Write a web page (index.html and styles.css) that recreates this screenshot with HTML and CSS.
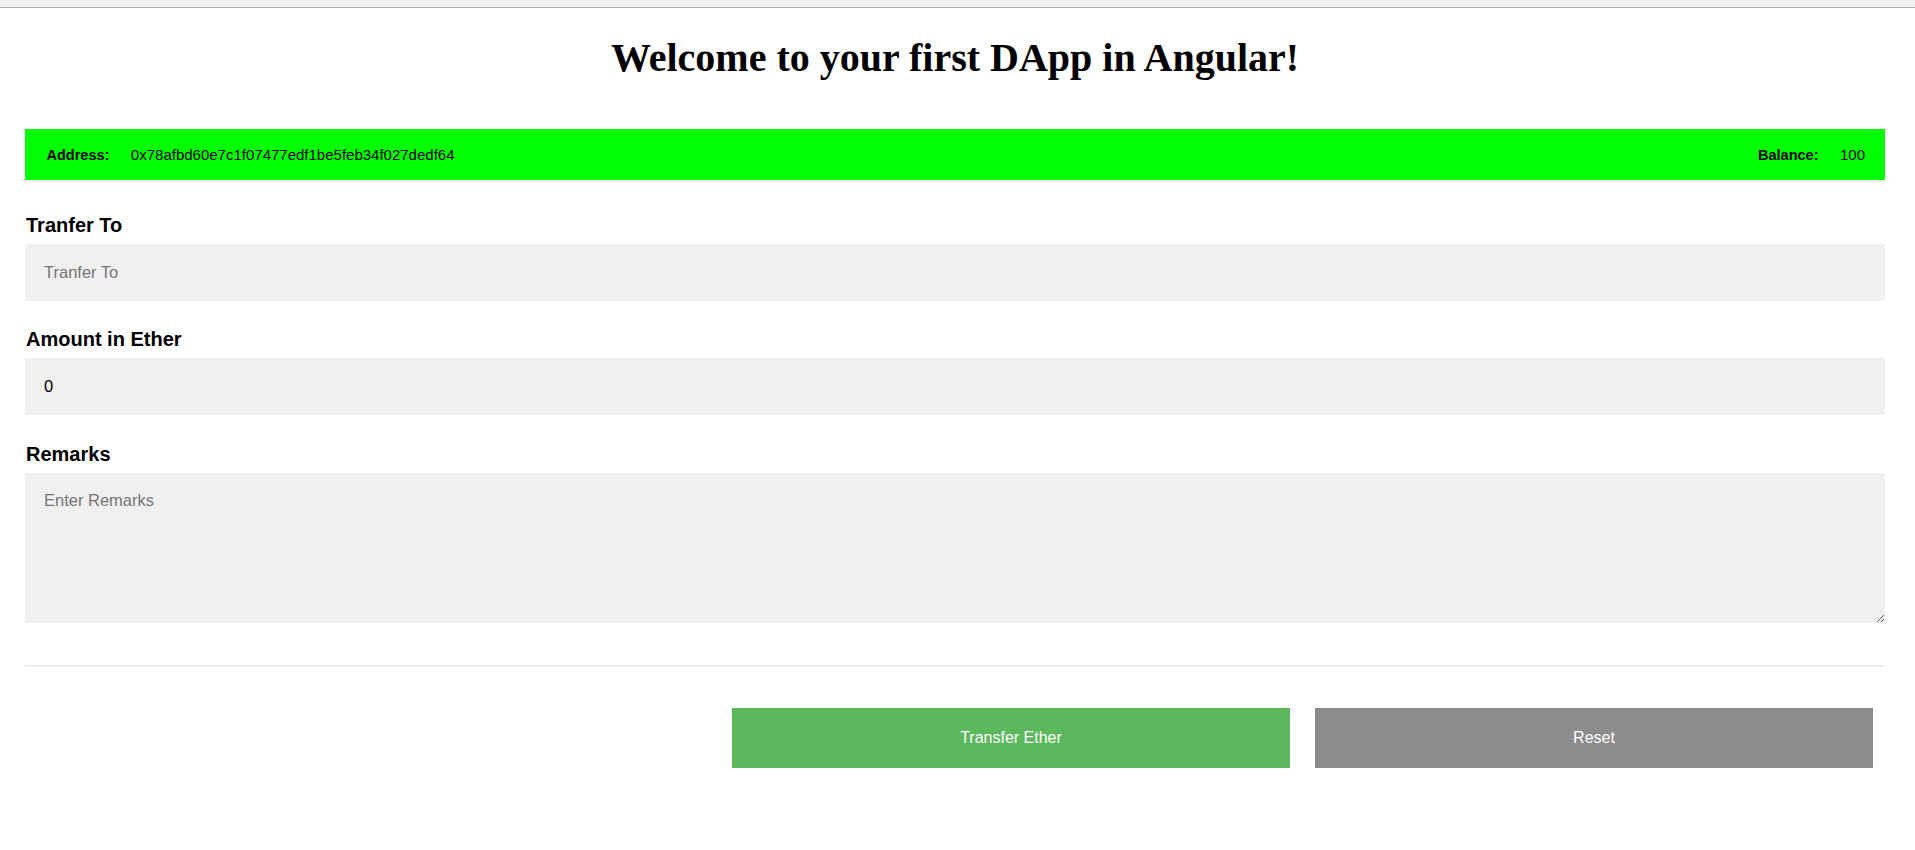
FILE: index.html
```html
<!DOCTYPE html>
<html lang="en">
<head>
<meta charset="utf-8">
<title>DApp</title>
<link rel="stylesheet" href="styles.css">
</head>
<body>
<div class="chrome-edge"></div>
<main class="app">
  <h1 class="title">Welcome to your first DApp in Angular!</h1>
  <div class="account-bar">
    <div class="account-item">
      <span class="account-label">Address:</span>
      <span class="account-value">0x78afbd60e7c1f07477edf1be5feb34f027dedf64</span>
    </div>
    <div class="account-item">
      <span class="account-label">Balance:</span>
      <span class="account-value">100</span>
    </div>
  </div>
  <form class="transfer-form">
    <div class="form-group">
      <label class="field-label" for="to">Tranfer To</label>
      <input class="field-input" id="to" type="text" placeholder="Tranfer To">
    </div>
    <div class="form-group">
      <label class="field-label" for="amount">Amount in Ether</label>
      <input class="field-input" id="amount" type="text" value="0">
    </div>
    <div class="form-group">
      <label class="field-label" for="remarks">Remarks</label>
      <textarea class="field-textarea" id="remarks" placeholder="Enter Remarks"></textarea>
    </div>
    <hr class="divider">
    <div class="actions">
      <button type="button" class="btn btn-transfer">Transfer Ether</button>
      <button type="button" class="btn btn-reset">Reset</button>
    </div>
  </form>
</main>
</body>
</html>
```
FILE: styles.css
```css
html, body {
  margin: 0;
  padding: 0;
  background: #ffffff;
}

body {
  font-family: "Liberation Sans", Arial, sans-serif;
  color: #000;
}

.chrome-edge {
  height: 7px;
  background: #f1f1f1;
  border-bottom: 1px solid #b0b0b0;
}

.app {
  margin: 0 30px 0 25px;
}

.title {
  font-family: "Liberation Serif", "Times New Roman", serif;
  font-weight: bold;
  font-size: 40px;
  line-height: 44px;
  text-align: center;
  margin: 28px 0 49px;
}

.account-bar {
  display: flex;
  justify-content: space-between;
  align-items: center;
  height: 51px;
  padding: 0 20px 0 21.5px;
  background: #00ff00;
  border-bottom: 2px solid #eeeeee;
  font-size: 15px;
}

.account-item {
  display: flex;
  align-items: center;
  gap: 21.5px;
}

.account-label {
  font-weight: bold;
  font-size: 14.5px;
}

.transfer-form {
  display: flex;
  flex-direction: column;
  padding-top: 31.5px;
}

.form-group {
  display: flex;
  flex-direction: column;
  margin-bottom: 27.5px;
}

.field-label {
  font-weight: bold;
  font-size: 20px;
  line-height: 22px;
  margin-bottom: 8px;
  padding-left: 1px;
}

.field-input,
.field-textarea {
  box-sizing: border-box;
  width: 100%;
  border: none;
  outline: none;
  background: #f0f0f0;
  font-family: "Liberation Sans", Arial, sans-serif;
  font-size: 16.5px;
  color: #000;
  margin: 0;
}

.field-input {
  height: 57px;
  padding: 0 19px;
}

.field-textarea {
  height: 150px;
  padding: 18.5px 19px;
  resize: vertical;
  display: block;
}

.field-input::placeholder,
.field-textarea::placeholder {
  color: #757575;
}

.divider {
  border: none;
  height: 2px;
  background: #eeeeee;
  margin: 15px 0 41px;
}

.actions {
  display: flex;
  justify-content: flex-end;
  gap: 25px;
  padding-right: 12px;
}

.btn {
  width: 558px;
  height: 60px;
  border: none;
  color: #ffffff;
  font-family: "Liberation Sans", Arial, sans-serif;
  font-size: 16px;
  cursor: pointer;
}

.btn-transfer {
  background: #5cb85c;
}

.btn-reset {
  background: #8c8c8c;
}
```
